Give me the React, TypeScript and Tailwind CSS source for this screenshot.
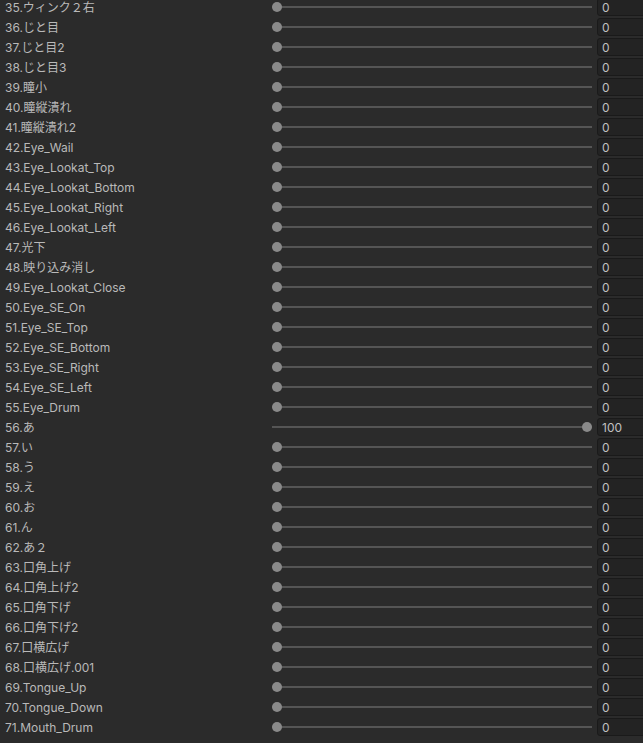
import React from "react";

interface BlendShape {
  name: string;
  value: number;
}

const names = [
  "ウィンク２右",
  "じと目",
  "じと目2",
  "じと目3",
  "瞳小",
  "瞳縦潰れ",
  "瞳縦潰れ2",
  "Eye_Wail",
  "Eye_Lookat_Top",
  "Eye_Lookat_Bottom",
  "Eye_Lookat_Right",
  "Eye_Lookat_Left",
  "光下",
  "映り込み消し",
  "Eye_Lookat_Close",
  "Eye_SE_On",
  "Eye_SE_Top",
  "Eye_SE_Bottom",
  "Eye_SE_Right",
  "Eye_SE_Left",
  "Eye_Drum",
  "あ",
  "い",
  "う",
  "え",
  "お",
  "ん",
  "あ２",
  "口角上げ",
  "口角上げ2",
  "口角下げ",
  "口角下げ2",
  "口横広げ",
  "口横広げ.001",
  "Tongue_Up",
  "Tongue_Down",
  "Mouth_Drum",
];

const shapes: BlendShape[] = names.map((name, i) => ({
  name: `${35 + i}.${name}`,
  value: name === "あ" ? 100 : 0,
}));

const BlendShapeRow: React.FC<{ shape: BlendShape }> = ({ shape }) => (
  <div className="flex h-[18px] items-start">
    <div className="w-[272px] shrink-0 truncate pl-[5px] pt-[1px] leading-[18px]">{shape.name}</div>
    <div className="relative h-[18px] w-[320px] shrink-0">
      <div className="absolute left-0 right-0 top-[8px] h-[2px] bg-[#555555]" />
      <div
        className="absolute top-[4px] h-[10px] w-[10px] rounded-full bg-[#8a8a8a]"
        style={{ left: `${(shape.value / 100) * 310}px` }}
      />
    </div>
    <div className="ml-[5px] h-[18px] w-[60px] shrink-0 rounded-[3px] border border-[#1a1a1a] bg-[#232323] pl-[4px] pt-[1px] leading-[16px] text-[#c0c0c0]">
      {shape.value}
    </div>
  </div>
);

export default function App() {
  return (
    <div
      className="h-[743px] w-[643px] overflow-hidden bg-[#2b2b2b] text-[12px] text-[#b9b9b9]"
      style={{ fontFamily: 'Inter, "Noto Sans CJK JP", sans-serif' }}
    >
      <div className="-mt-[2px] flex flex-col gap-[2px]">
        {shapes.map((s) => (
          <BlendShapeRow key={s.name} shape={s} />
        ))}
      </div>
    </div>
  );
}
